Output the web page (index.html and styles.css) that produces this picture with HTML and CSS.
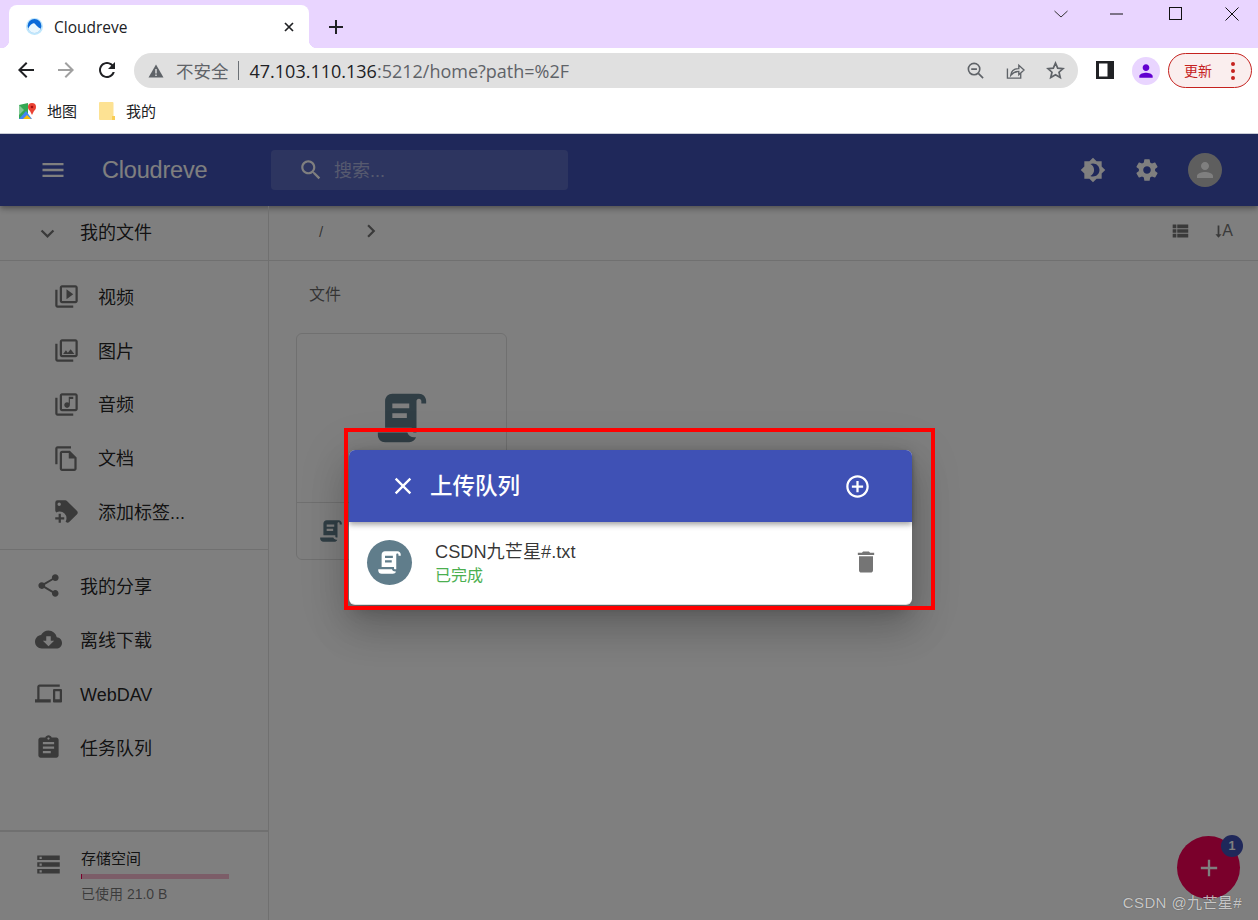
FILE: index.html
```html
<!DOCTYPE html>
<html lang="zh">
<head>
<meta charset="utf-8">
<title>Cloudreve</title>
<link rel="stylesheet" href="styles.css">
</head>
<body>
<header class="browser">
  <div class="titlebar">
    <div class="tab">
      <svg class="favicon" viewBox="0 0 16 16"><circle cx="8" cy="8" r="8" fill="#bfe6fb"/><circle cx="8" cy="7.500" r="6.500" fill="#0b6ad9"/><path d="M2 10C3.500 7 6 4.500 7.500 5c1.500.5 2.500 3.500 6.500 5-1 2.500-3.300 4-6 4s-5-1.500-6-4z" fill="#eaf7fe"/></svg>
      <span class="tab-title">Cloudreve</span>
      <svg class="tab-close" viewBox="0 0 12 12"><path d="M2 2l8 8M10 2l-8 8" stroke="#202124" stroke-width="1.700" fill="none"/></svg>
    </div>
    <svg class="new-tab" viewBox="0 0 14 14"><path d="M7 0v14M0 7h14" stroke="#202124" stroke-width="2" fill="none"/></svg>
    <div class="window-controls">
      <svg class="wc wc-chev" viewBox="0 0 14 8"><path d="M.5 1l6.500 6 6.500-6" stroke="#333" stroke-width="1" fill="none"/></svg>
      <svg class="wc wc-min" viewBox="0 0 14 14"><path d="M0 7h13" stroke="#111" stroke-width="1" fill="none"/></svg>
      <svg class="wc wc-max" viewBox="0 0 14 14"><rect x=".5" y=".5" width="12" height="12" stroke="#111" fill="none"/></svg>
      <svg class="wc wc-close" viewBox="0 0 14 14"><path d="M.5.500l13 13M13.500.500l-13 13" stroke="#111" stroke-width="1" fill="none"/></svg>
    </div>
  </div>
  <div class="toolbar">
    <svg class="tb-icon tb-back" viewBox="0 0 24 24"><path d="M20 11H7.830l5.590-5.590L12 4l-8 8 8 8 1.410-1.410L7.830 13H20v-2z" fill="#202124"/></svg>
    <svg class="tb-icon tb-fwd" viewBox="0 0 24 24"><path d="M4 11h12.170l-5.590-5.590L12 4l8 8-8 8-1.410-1.410L16.170 13H4v-2z" fill="#a0a0a0"/></svg>
    <svg class="tb-icon tb-reload" viewBox="0 0 24 24"><path d="M17.650 6.350C16.200 4.900 14.210 4 12 4c-4.420 0-7.990 3.580-7.990 8s3.570 8 7.990 8c3.730 0 6.840-2.550 7.730-6h-2.080c-.82 2.330-3.040 4-5.650 4-3.310 0-6-2.690-6-6s2.690-6 6-6c1.660 0 3.140.69 4.220 1.780L13 11h7V4l-2.350 2.350z" fill="#202124"/></svg>
    <div class="omnibox">
      <svg class="warn" viewBox="0 0 16 16"><path d="M8 1.500L15.500 14.500H.5z" fill="#5f6368"/><path d="M8 6v4.500M8 11.500v1.500" stroke="#e0e0e0" stroke-width="1.400"/></svg>
      <span class="insecure">不安全</span>
      <span class="url-sep"></span>
      <span class="url"><span class="url-host">47.103.110.136</span>:5212/home?path=%2F</span>
      <span class="omni-actions">
        <svg class="omni-icon" viewBox="0 0 20 20"><circle cx="8.500" cy="8.500" r="6" stroke="#5f6368" stroke-width="1.700" fill="none"/><path d="M5.500 8.500h6M13 13l5 5" stroke="#5f6368" stroke-width="1.700" fill="none"/></svg>
        <svg class="omni-icon" viewBox="0 0 20 20"><path d="M1.500 8v10h14v-5" stroke="#5f6368" stroke-width="1.400" fill="none"/><path d="M5 15c.5-4.500 4-7 8.500-7V4.500L19 9.500l-5.500 5V11C10 11 7 12.500 5 15z" stroke="#5f6368" stroke-width="1.400" fill="none"/></svg>
        <svg class="omni-icon" viewBox="0 0 20 20"><path d="M10 2.200l2.300 5.300 5.700.5-4.300 3.800 1.300 5.600-5-3-5 3 1.300-5.600L2 8l5.700-.5z" stroke="#5f6368" stroke-width="1.800" fill="none"/></svg>
      </span>
    </div>
    <svg class="panel-icon" viewBox="0 0 18 18"><rect width="18" height="18" fill="#202124"/><rect x="3" y="2.500" width="8.500" height="13" fill="#fff"/></svg>
    <span class="profile"><svg viewBox="0 0 24 24"><path d="M12 12c2.210 0 4-1.790 4-4s-1.790-4-4-4-4 1.790-4 4 1.790 4 4 4zm0 2c-2.670 0-8 1.340-8 4v2h16v-2c0-2.660-5.330-4-8-4z" fill="#6200d0"/></svg></span>
    <span class="update">更新<span class="dots"><i></i><i></i><i></i></span></span>
  </div>
  <div class="bookmarks">
    <span class="bookmark bm-map">
      <svg class="bm-icon" viewBox="0 0 18 18"><path d="M1 3l9-2v16l-9 0z" fill="#34a853"/><path d="M1 17l7-8 6 8z" fill="#4285f4"/><path d="M5 17l4-4 4 4z" fill="#fbbc04"/><path d="M1 3l5 5-5 5z" fill="#81c995"/><circle cx="14" cy="5" r="4" fill="#ea4335"/><path d="M11 7l3 6 3-6z" fill="#ea4335"/><circle cx="14" cy="5" r="1.300" fill="#a50e0e"/></svg>
      地图
    </span>
    <span class="bookmark">
      <svg class="bm-icon bm-folder" viewBox="0 0 16 18"><path d="M1 0h12.500a1 1 0 0 1 1 1v16a1 1 0 0 1-1 1H1a1 1 0 0 1-1-1V1a1 1 0 0 1 1-1z" fill="#fde293"/><path d="M13 18v-4h3v4z" fill="#f9ce55"/></svg>
      我的
    </span>
  </div>
</header>

<div class="app">
  <div class="appbar">
    <svg class="ico bar-menu" viewBox="0 0 24 24"><path d="M3 18h18v-2H3v2zm0-5h18v-2H3v2zm0-7v2h18V6H3z"/></svg>
    <span class="brand">Cloudreve</span>
    <div class="search">
      <svg class="ico" viewBox="0 0 24 24"><path d="M15.500 14h-.79l-.28-.27C15.410 12.590 16 11.110 16 9.500 16 5.910 13.090 3 9.500 3S3 5.910 3 9.500 5.910 16 9.500 16c1.610 0 3.090-.59 4.230-1.570l.27.28v.79l5 4.990L20.490 19l-4.990-5zm-6 0C7.010 14 5 11.990 5 9.500S7.010 5 9.500 5 14 7.010 14 9.500 11.990 14 9.500 14z"/></svg>
      <span class="search-ph">搜索...</span>
    </div>
    <div class="bar-actions">
      <svg class="ico ico-bar" viewBox="0 0 24 24"><path d="M20 8.690V4h-4.690L12 .69 8.690 4H4v4.690L.69 12 4 15.310V20h4.690L12 23.310 15.310 20H20v-4.690L23.310 12 20 8.690zM12 18c-.89 0-1.740-.2-2.500-.55C11.560 16.500 13 14.420 13 12s-1.440-4.500-3.500-5.450C10.260 6.200 11.110 6 12 6c3.310 0 6 2.690 6 6s-2.690 6-6 6z"/></svg>
      <svg class="ico ico-bar" viewBox="0 0 24 24"><path d="M19.430 12.980c.04-.32.07-.64.07-.98s-.03-.66-.07-.98l2.110-1.650c.19-.15.24-.42.12-.64l-2-3.460c-.12-.22-.39-.3-.61-.22l-2.490 1c-.52-.4-1.080-.73-1.690-.98l-.38-2.650C14.460 2.180 14.250 2 14 2h-4c-.25 0-.46.18-.49.42l-.38 2.650c-.61.25-1.170.59-1.690.98l-2.490-1c-.23-.09-.49 0-.61.22l-2 3.460c-.13.22-.07.49.12.64l2.110 1.650c-.04.32-.07.65-.07.98s.03.66.07.98l-2.110 1.650c-.19.15-.24.42-.12.64l2 3.460c.12.22.39.3.61.22l2.490-1c.52.4 1.080.73 1.690.98l.38 2.650c.03.24.24.42.49.42h4c.25 0 .46-.18.49-.42l.38-2.650c.61-.25 1.170-.59 1.690-.98l2.490 1c.23.09.49 0 .61-.22l2-3.460c.12-.22.07-.49-.12-.64l-2.110-1.650zM12 15.500c-1.930 0-3.500-1.570-3.500-3.500s1.570-3.500 3.500-3.500 3.500 1.570 3.500 3.500-1.570 3.500-3.500 3.500z"/></svg>
      <span class="avatar"><svg class="ico" viewBox="0 0 24 24"><path d="M12 12c2.210 0 4-1.790 4-4s-1.790-4-4-4-4 1.790-4 4 1.790 4 4 4zm0 2c-2.670 0-8 1.340-8 4v2h16v-2c0-2.660-5.330-4-8-4z"/></svg></span>
    </div>
  </div>
  <div class="body">
    <aside class="sidebar">
      <div class="side-head">
        <svg class="ico side-ico" viewBox="0 0 24 24"><path d="M16.590 8.590L12 13.170 7.410 8.590 6 10l6 6 6-6z"/></svg>
        <span class="side-label">我的文件</span>
      </div>
      <nav class="side-sub">
        <div class="sub-row"><svg class="ico side-ico" viewBox="0 0 24 24"><path d="M4 6H2v14c0 1.100.9 2 2 2h14v-2H4V6zm16-4H8c-1.100 0-2 .9-2 2v12c0 1.100.9 2 2 2h12c1.100 0 2-.9 2-2V4c0-1.100-.9-2-2-2zm0 14H8V4h12v12zM12 5.500v9l6-4.500z"/></svg><span class="side-label">视频</span></div>
        <div class="sub-row"><svg class="ico side-ico" viewBox="0 0 24 24"><path d="M20 4v12H8V4h12m0-2H8c-1.100 0-2 .9-2 2v12c0 1.100.9 2 2 2h12c1.100 0 2-.9 2-2V4c0-1.100-.9-2-2-2zm-8.500 9.670l1.690 2.260 2.480-3.100L19 15H9zM2 6v14c0 1.100.9 2 2 2h14v-2H4V6H2z"/></svg><span class="side-label">图片</span></div>
        <div class="sub-row"><svg class="ico side-ico" viewBox="0 0 24 24"><path d="M20 2H8c-1.100 0-2 .9-2 2v12c0 1.100.9 2 2 2h12c1.100 0 2-.9 2-2V4c0-1.100-.9-2-2-2zm0 14H8V4h12v12zm-7.500-1c1.380 0 2.500-1.120 2.500-2.500V7h3V5h-4v5.510c-.42-.32-.93-.51-1.500-.51-1.380 0-2.500 1.120-2.500 2.500s1.120 2.500 2.500 2.500zM2 6v14c0 1.100.9 2 2 2h14v-2H4V6H2z"/></svg><span class="side-label">音频</span></div>
        <div class="sub-row"><svg class="ico side-ico" viewBox="0 0 24 24"><path d="M16 1H4c-1.100 0-2 .9-2 2v14h2V3h12V1zm-1 4H8c-1.100 0-1.990.9-1.990 2L6 21c0 1.100.89 2 1.990 2H19c1.100 0 2-.9 2-2V11l-6-6zM8 21V7h6v5h5v9H8z"/></svg><span class="side-label">文档</span></div>
        <div class="sub-row"><svg class="ico side-ico" viewBox="0 0 24 24"><path d="M21.410 11.580L12.410 2.580C12.050 2.220 11.550 2 11 2H4A2 2 0 0 0 2 4V11C2 11.550 2.220 12.050 2.590 12.410L3 12.810C3.900 12.270 4.940 12 6 12A6 6 0 0 1 12 18C12 19.060 11.720 20.090 11.180 21L11.580 21.400C11.950 21.780 12.450 22 13 22C13.550 22 14.050 21.780 14.410 21.410L21.410 14.410C21.780 14.050 22 13.550 22 13C22 12.450 21.780 11.950 21.410 11.580M5.500 7A1.500 1.500 0 0 1 4 5.500A1.500 1.500 0 0 1 5.500 4A1.500 1.500 0 0 1 7 5.500A1.500 1.500 0 0 1 5.500 7M10 19H7V22H5V19H2V17H5V14H7V17H10V19Z"/></svg><span class="side-label">添加标签...</span></div>
      </nav>
      <nav class="side-main">
        <div class="main-row"><svg class="ico side-ico" viewBox="0 0 24 24"><path d="M18 16.080c-.76 0-1.440.3-1.960.77L8.910 12.700c.05-.23.09-.46.09-.7s-.04-.47-.09-.7l7.050-4.110c.54.5 1.250.81 2.040.81 1.660 0 3-1.340 3-3s-1.340-3-3-3-3 1.340-3 3c0 .24.04.47.09.7L8.040 9.810C7.500 9.310 6.790 9 6 9c-1.660 0-3 1.340-3 3s1.340 3 3 3c.79 0 1.500-.31 2.040-.81l7.120 4.160c-.05.21-.08.43-.08.65 0 1.610 1.310 2.920 2.920 2.920 1.610 0 2.920-1.310 2.920-2.920s-1.310-2.920-2.920-2.920z"/></svg><span class="side-label">我的分享</span></div>
        <div class="main-row"><svg class="ico side-ico" viewBox="0 0 24 24"><path d="M19.350 10.040C18.670 6.590 15.640 4 12 4 9.110 4 6.600 5.640 5.350 8.040 2.340 8.360 0 10.910 0 14c0 3.310 2.690 6 6 6h13c2.760 0 5-2.240 5-5 0-2.640-2.050-4.780-4.650-4.960zM17 13l-5 5-5-5h3V9h4v4h3z"/></svg><span class="side-label">离线下载</span></div>
        <div class="main-row"><svg class="ico side-ico" viewBox="0 0 24 24"><path d="M4 6h18V4H4c-1.100 0-2 .9-2 2v11H0v3h14v-3H4V6zm19 2h-6c-.55 0-1 .45-1 1v10c0 .55.45 1 1 1h6c.55 0 1-.45 1-1V9c0-.55-.45-1-1-1zm-1 9h-4v-7h4v7z"/></svg><span class="side-label">WebDAV</span></div>
        <div class="main-row"><svg class="ico side-ico" viewBox="0 0 24 24"><path d="M19 3h-4.180C14.400 1.840 13.300 1 12 1c-1.300 0-2.400.84-2.820 2H5c-1.100 0-2 .9-2 2v14c0 1.100.9 2 2 2h14c1.100 0 2-.9 2-2V5c0-1.100-.9-2-2-2zm-7 0c.55 0 1 .45 1 1s-.45 1-1 1-1-.45-1-1 .45-1 1-1zm2 14H7v-2h7v2zm3-4H7v-2h10v2zm0-4H7V7h10v2z"/></svg><span class="side-label">任务队列</span></div>
      </nav>
      <div class="side-fill"></div>
      <div class="storage">
        <svg class="ico side-ico" viewBox="0 0 24 24"><path d="M2 20h20v-4H2v4zm2-3h2v2H4v-2zM2 4v4h20V4H2zm4 3H4V5h2v2zm-4 7h20v-4H2v4zm2-3h2v2H4v-2z"/></svg>
        <div class="storage-info">
          <div class="storage-title">存储空间</div>
          <div class="storage-bar"><div class="storage-fill"></div></div>
          <div class="storage-used">已使用 21.0 B</div>
        </div>
      </div>
    </aside>
    <main class="main">
      <div class="nav-bar">
        <span class="crumb">/</span>
        <svg class="ico crumb-next" viewBox="0 0 24 24"><path d="M10 6L8.590 7.410 13.170 12l-4.580 4.590L10 18l6-6z"/></svg>
        <span class="nav-fill"></span>
        <svg class="ico nav-view" viewBox="0 0 24 24"><path d="M4 14h4v-4H4v4zm0 5h4v-4H4v4zM4 9h4V5H4v4zm5 5h12v-4H9v4zm0 5h12v-4H9v4zM9 5v4h12V5H9z"/></svg>
        <span class="nav-sort"><svg class="ico" viewBox="0 0 8 16"><path d="M3 1h2v10h2.500L4 15 .5 11H3z"/></svg>A</span>
      </div>
      <div class="section-title">文件</div>
      <div class="file-card">
        <div class="file-preview">
          <svg class="file-big" viewBox="0 0 24 24"><path d="M17.800 20C17.400 21.200 16.300 22 15 22H5C3.300 22 2 20.700 2 19V18H5L14.200 18C14.600 19.200 15.700 20 17 20H17.800M19 2C20.700 2 22 3.300 22 5V6H20V5C20 4.400 19.600 4 19 4C18.400 4 18 4.400 18 5V18H17C16.400 18 16 17.600 16 17V16H5V5C5 3.300 6.300 2 8 2H19M8 6V8H15V6H8M8 10V12H14V10H8Z"/></svg>
        </div>
        <div class="file-foot">
          <svg class="file-small" viewBox="0 0 24 24"><path d="M17.800 20C17.400 21.200 16.300 22 15 22H5C3.300 22 2 20.700 2 19V18H5L14.200 18C14.600 19.200 15.700 20 17 20H17.800M19 2C20.700 2 22 3.300 22 5V6H20V5C20 4.400 19.600 4 19 4C18.400 4 18 4.400 18 5V18H17C16.400 18 16 17.600 16 17V16H5V5C5 3.300 6.300 2 8 2H19M8 6V8H15V6H8M8 10V12H14V10H8Z"/></svg>
        </div>
      </div>
    </main>
  </div>
  <div class="fab">
    <svg class="fab-plus" viewBox="0 0 24 24"><path d="M19 13h-6v6h-2v-6H5v-2h6V5h2v6h6v2z"/></svg>
    <span class="fab-badge">1</span>
  </div>
  <div class="scrim"></div>
  <section class="dialog">
    <div class="dialog-head">
      <svg class="ico-white dlg-close" viewBox="0 0 24 24"><path d="M19 6.410L17.590 5 12 10.590 6.410 5 5 6.410 10.590 12 5 17.590 6.410 19 12 13.410 17.590 19 19 17.590 13.410 12z"/></svg>
      <span class="dlg-title">上传队列</span>
      <svg class="ico-white dlg-add" viewBox="0 0 24 24"><path d="M13 7h-2v4H7v2h4v4h2v-4h4v-2h-4V7zm-1-5C6.480 2 2 6.480 2 12s4.480 10 10 10 10-4.480 10-10S17.520 2 12 2zm0 18c-4.410 0-8-3.590-8-8s3.590-8 8-8 8 3.590 8 8-3.590 8-8 8z"/></svg>
    </div>
    <div class="dlg-item">
      <span class="dlg-avatar"><svg class="ico-white" viewBox="0 0 24 24"><path d="M17.800 20C17.400 21.200 16.300 22 15 22H5C3.300 22 2 20.700 2 19V18H5L14.200 18C14.600 19.200 15.700 20 17 20H17.800M19 2C20.700 2 22 3.300 22 5V6H20V5C20 4.400 19.600 4 19 4C18.400 4 18 4.400 18 5V18H17C16.400 18 16 17.600 16 17V16H5V5C5 3.300 6.300 2 8 2H19M8 6V8H15V6H8M8 10V12H14V10H8Z"/></svg></span>
      <div class="dlg-text">
        <div class="dlg-name">CSDN九芒星#.txt</div>
        <div class="dlg-status">已完成</div>
      </div>
      <svg class="dlg-trash" viewBox="0 0 24 24"><path d="M6 19c0 1.100.9 2 2 2h8c1.100 0 2-.9 2-2V7H6v12zM19 4h-3.500l-1-1h-5l-1 1H5v2h14V4z"/></svg>
    </div>
  </section>
  <div class="red-frame"></div>
  <div class="watermark">CSDN @九芒星#</div>
</div>
</body>
</html>
```

FILE: styles.css
```css
* { box-sizing: border-box; }
html, body { margin: 0; padding: 0; height: 920px; overflow: hidden; background: #fff; }
body {
  font-family: "Liberation Sans", "Noto Sans CJK SC", sans-serif;
  display: flex;
  flex-direction: column;
}
svg { display: block; flex: none; }

/* browser chrome */
.browser { height: 134px; flex: none; border-bottom: 1px solid #c9ccd6; }
.titlebar {
  height: 48px;
  background: #e9d5ff;
  display: flex;
  align-items: flex-end;
  padding-left: 9px;
  position: relative;
}
.tab {
  width: 300px;
  height: 43px;
  background: #fff;
  border-radius: 8px 8px 0 0;
  display: flex;
  align-items: center;
  padding: 0 14px 0 17px;
  position: relative;
}
.tab::before, .tab::after {
  content: "";
  position: absolute;
  bottom: 0;
  width: 8px;
  height: 8px;
}
.tab::before { left: -8px; background: radial-gradient(circle at 0 0, #e9d5ff 8px, #fff 8.5px); }
.tab::after { right: -8px; background: radial-gradient(circle at 100% 0, #e9d5ff 8px, #fff 8.5px); }
.favicon { width: 17px; height: 17px; }
.tab-title {
  flex: 1;
  margin-left: 11px;
  font: 15.500px "Open Sans", "Liberation Sans", sans-serif;
  color: #202124;
}
.tab-close { width: 12px; height: 12px; }
.new-tab { width: 14px; height: 14px; margin: 0 0 14px 20px; }
.window-controls {
  position: absolute;
  top: 0;
  right: 0;
  height: 27px;
  display: flex;
  align-items: center;
}
.wc { width: 14px; height: 14px; }
.wc-chev { height: 8px; margin-right: 42px; }
.wc-min { margin-right: 45px; }
.wc-max { margin-right: 42px; }
.wc-close { margin-right: 19px; }

.toolbar { height: 46px; display: flex; align-items: flex-start; padding-top: 5px; position: relative; }
.tb-icon { width: 24px; height: 24px; margin-top: 5px; }
.tb-back { margin-left: 14px; }
.tb-fwd { margin-left: 16px; }
.tb-reload { margin-left: 17px; }
.omnibox {
  width: 944px;
  height: 35px;
  margin-left: 15px;
  border-radius: 18px;
  background: #e0e0e0;
  display: flex;
  align-items: center;
  padding-left: 14px;
  font: 18px "Open Sans", "Noto Sans CJK SC", sans-serif;
  color: #5f6368;
}
.warn { width: 16px; height: 16px; }
.insecure { margin-left: 12px; font-size: 17.500px; font-family: "Noto Sans CJK SC", sans-serif; }
.url-sep { width: 1px; height: 19px; background: #6b7075; margin: 0 11px 0 9px; }
.url-host { color: #202124; }
.omni-actions { margin-left: auto; display: flex; gap: 21px; padding-right: 13px; }
.omni-icon { width: 19px; height: 19px; }
.panel-icon { width: 18px; height: 18px; margin: 8px 0 0 18px; }
.profile {
  width: 28px;
  height: 28px;
  margin: 4px 0 0 18px;
  border-radius: 50%;
  background: #e9d5ff;
  display: flex;
  align-items: center;
  justify-content: center;
}
.profile svg { width: 20px; height: 20px; }
.update {
  width: 84px;
  height: 35px;
  margin-left: 8px;
  border: 1px solid #c5221f;
  border-radius: 18px;
  background: #faeeee;
  color: #c5221f;
  font: 14px/32px "Noto Sans CJK SC", sans-serif;
  display: flex;
  align-items: flex-start;
  padding-left: 15px;
  position: relative;
}
.dots { position: absolute; right: 16px; top: 8px; display: flex; flex-direction: column; gap: 3px; }
.dots i { width: 4px; height: 4px; border-radius: 50%; background: #c5221f; display: block; }
.bookmarks {
  height: 33px;
  display: flex;
  align-items: center;
  padding-left: 18px;
  gap: 22px;
  font: 15px "Noto Sans CJK SC", sans-serif;
  color: #202124;
}
.bookmark { display: flex; align-items: center; gap: 11px; }
.bm-icon { width: 18px; height: 18px; }
.bm-folder { width: 16px; }

/* app */
.app {
  height: 786px;
  flex: none;
  position: relative;
  overflow: hidden;
  color: rgba(0, 0, 0, .87);
}
.ico { width: 24px; height: 24px; fill: #757575; }
.appbar {
  height: 72px;
  background: #3f51b5;
  display: flex;
  align-items: center;
  position: relative;
  box-shadow: 0 2px 4px -1px rgba(0,0,0,.2), 0 4px 5px rgba(0,0,0,.14), 0 1px 10px rgba(0,0,0,.12);
}
.appbar .ico { fill: #fff; }
.bar-menu { width: 28px; height: 28px; margin-left: 39px; }
.brand { margin-left: 35px; font-size: 23.500px; color: #fff; width: 169px; letter-spacing: -.2px; }
.search {
  width: 297px;
  height: 40px;
  border-radius: 4px;
  background: rgba(255,255,255,.15);
  display: flex;
  align-items: center;
  padding-left: 27px;
  color: rgba(255,255,255,.5);
}
.search .ico { width: 26px; height: 26px; }
.search-ph { margin: 0 0 2px 10px; font-size: 18px; }
.bar-actions { margin-left: auto; padding-right: 36px; display: flex; align-items: center; gap: 28px; }
.appbar .ico-bar { width: 26px; height: 26px; }
.avatar {
  width: 34px;
  height: 34px;
  border-radius: 50%;
  background: #bdbdbd;
  display: flex;
  align-items: center;
  justify-content: center;
}

.body { height: 714px; display: flex; position: relative; }
.sidebar {
  width: 269px;
  flex: none;
  border-right: 1px solid #e0e0e0;
  display: flex;
  flex-direction: column;
  font-size: 18px;
}
.side-ico { width: 27px; height: 27px; }
.side-label { line-height: 24px; margin-top: 2px; }
.side-head {
  height: 55px;
  flex: none;
  border-bottom: 1px solid #e0e0e0;
  display: flex;
  align-items: center;
  padding-left: 34px;
  gap: 19px;
}
.side-head .side-label { margin-top: 0; }
.side-sub { padding: 9px 0 10px; border-bottom: 1px solid #e0e0e0; }
.sub-row { height: 53.750px; display: flex; align-items: center; padding-left: 53px; gap: 18px; }
.side-main { padding-top: 9px; }
.main-row { height: 54px; display: flex; align-items: center; padding-left: 35px; gap: 18px; }
.side-fill { flex: 1; }
.storage {
  height: 90px;
  flex: none;
  border-top: 2px solid #e0e0e0;
  display: flex;
  align-items: flex-start;
  padding: 19px 0 0 35px;
  gap: 19px;
}
.storage-info { flex: 1; padding-right: 39px; padding-top: 1px; }
.storage-title { font-size: 15px; line-height: 16px; margin-top: -1px; }
.storage-bar { height: 5px; margin-top: 7px; background: #f8bbd0; position: relative; }
.storage-fill { width: 1px; height: 5px; background: #f50057; }
.storage-used { font-size: 14px; line-height: 16px; margin-top: 7px; color: rgba(0,0,0,.54); }

.main { flex: 1; min-width: 0; }
.nav-bar {
  height: 55px;
  border-bottom: 1px solid #e0e0e0;
  display: flex;
  align-items: center;
  padding: 0 25px 4px 50px;
  color: rgba(0,0,0,.6);
  font-size: 15px;
}
.crumb { width: 39px; }
.crumb-next { width: 26px; height: 26px; }
.nav-fill { flex: 1; }
.nav-view { width: 22px; height: 22px; margin-right: 24px; }
.nav-sort { display: flex; align-items: center; font-size: 16px; color: #757575; }
.nav-sort svg { width: 7px; height: 15px; }
.section-title { margin: 25px 0 0 40px; font-size: 16px; line-height: 18px; color: rgba(0,0,0,.6); }
.file-card {
  width: 211px;
  height: 227px;
  margin: 29px 0 0 27px;
  border: 1px solid #e0e0e0;
  border-radius: 6px;
  display: flex;
  flex-direction: column;
}
.file-preview { height: 169px; flex: none; border-bottom: 1px solid #e0e0e0; display: flex; justify-content: center; padding-top: 55px; }
.file-big { width: 58px; height: 58px; fill: #607d8b; }
.file-foot { padding: 15px 0 0 21px; }
.file-small { width: 26px; height: 26px; fill: #607d8b; }

.fab {
  position: absolute;
  left: 1177px;
  top: 702px;
  width: 63px;
  height: 63px;
  border-radius: 50%;
  background: #f50057;
  display: flex;
  align-items: center;
  justify-content: center;
}
.fab-plus { width: 28px; height: 28px; fill: #fff; }
.fab-badge {
  position: absolute;
  right: -3px;
  top: -1px;
  width: 22px;
  height: 22px;
  border-radius: 50%;
  background: #3f51b5;
  color: #fff;
  font-size: 12.500px;
  font-weight: 700;
  display: flex;
  align-items: center;
  justify-content: center;
}
.scrim { position: absolute; inset: 0; background: rgba(0,0,0,.5); }

.dialog {
  position: absolute;
  left: 349px;
  top: 316px;
  width: 563px;
  height: 155px;
  background: #fff;
  border-radius: 6px;
  border-bottom: 1px solid #ddd;
  box-shadow: 0 11px 15px -7px rgba(0,0,0,.2), 0 24px 38px 3px rgba(0,0,0,.14), 0 9px 46px 8px rgba(0,0,0,.12);
}
.dialog-head {
  height: 72px;
  background: #3f51b5;
  border-radius: 6px 6px 0 0;
  display: flex;
  align-items: center;
  padding: 0 41px 0 40px;
  box-shadow: 0 2px 4px -1px rgba(0,0,0,.2), 0 4px 5px rgba(0,0,0,.14), 0 1px 10px rgba(0,0,0,.12);
}
.ico-white { width: 24px; height: 24px; fill: #fff; }
.dlg-close { width: 28px; height: 28px; }
.dlg-add { width: 27px; height: 27px; }
.dlg-title { margin: 0 0 4px 13px; flex: 1; font-size: 22.500px; font-weight: 500; color: #fff; }
.dlg-item { height: 82px; display: flex; align-items: center; padding: 0 0 2px 18px; }
.dlg-avatar {
  width: 45px;
  height: 45px;
  border-radius: 50%;
  background: #607d8b;
  display: flex;
  align-items: center;
  justify-content: center;
}
.dlg-avatar .ico-white { width: 27px; height: 27px; }
.dlg-text { flex: 1; margin-left: 23px; padding-top: 4px; }
.dlg-name { font-size: 18.200px; line-height: 24px; color: rgba(0,0,0,.8); }
.dlg-status { font-size: 16px; line-height: 24px; color: #4caf50; }
.dlg-trash { width: 28px; height: 28px; margin-right: 32px; fill: #757575; }

.red-frame {
  position: absolute;
  left: 344px;
  top: 294px;
  width: 591px;
  height: 182px;
  border: 4px solid #f00;
}
.watermark {
  position: absolute;
  right: 16px;
  top: 760px;
  font-size: 15px;
  letter-spacing: .4px;
  line-height: 18px;
  color: rgba(255,255,255,.7);
  text-shadow: 0 0 1px rgba(0,0,0,.5);
}
```
